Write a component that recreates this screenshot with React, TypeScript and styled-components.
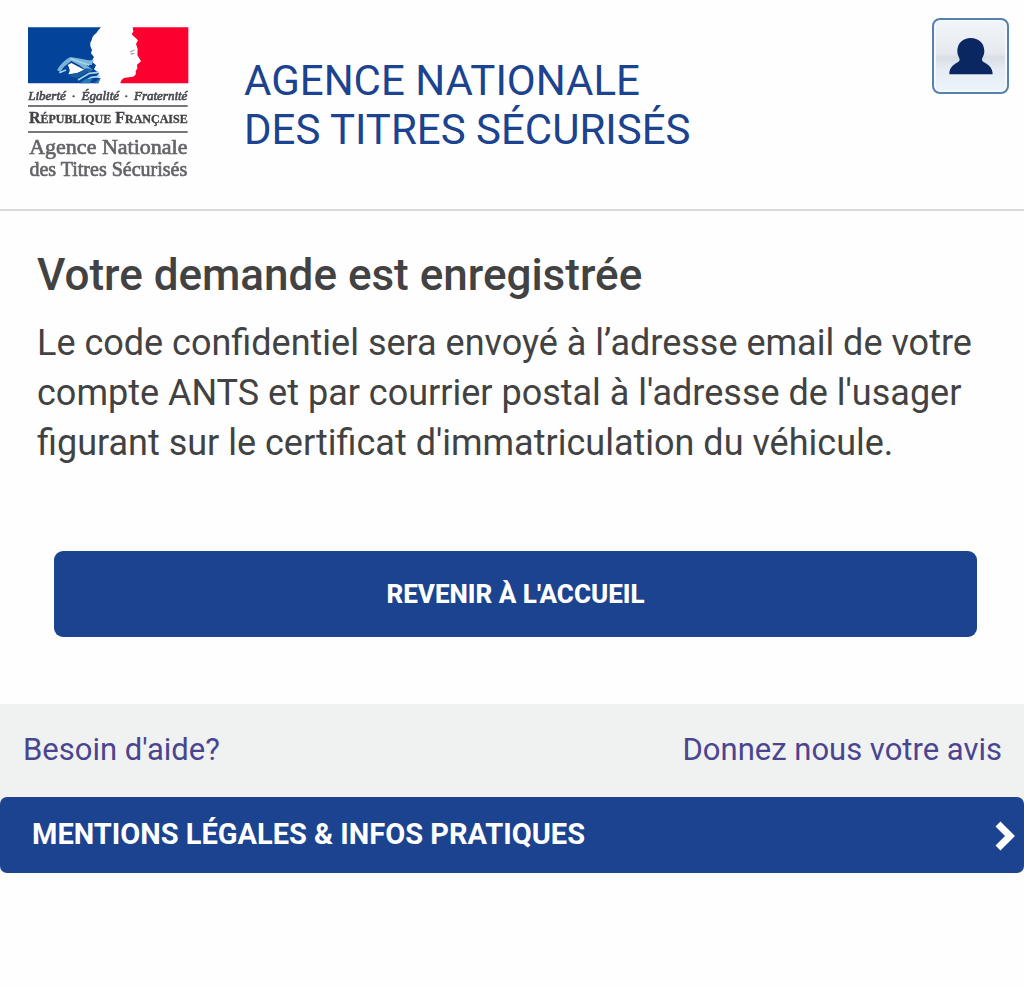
import React from "react";
import styled, { createGlobalStyle } from "styled-components";

const GlobalStyle = createGlobalStyle`
  *, *::before, *::after { box-sizing: border-box; }
  body {
    margin: 0;
    background: #fefefe;
    color: #424242;
    font-family: Roboto, "Liberation Sans", sans-serif;
  }
`;

const Header = styled.header`
  display: flex;
  align-items: flex-start;
  min-height: 211px;
  padding: 18px 15px 0 27px;
  border-bottom: 2px solid #d9dadb;
`;

const HomeLink = styled.a`
  flex: none;
  padding-top: 8px;
  line-height: 0;
`;

const LogoSvg = styled.svg`
  display: block;
  overflow: visible;
  filter: blur(0.7px);
`;

const SiteName = styled.div`
  flex: 1;
  padding: 38px 0 0 54px;
  color: #1b438f;
  font-size: 42px;
  line-height: 49px;
`;

const AccountButton = styled.button`
  flex: none;
  display: flex;
  align-items: center;
  justify-content: center;
  width: 77px;
  height: 76px;
  padding: 0;
  border: 2px solid #5682ab;
  border-radius: 8px;
  background: linear-gradient(#f2f5f9 0%, #e6eaf0 45%, #d9dee5 52%, #e6ecf4 68%, #edf3fb 100%);
  box-shadow: inset 0 0 0 2px #f3f8fc;
  cursor: pointer;
`;

const Main = styled.main`
  padding: 38px 37px 67px;
`;

const Title = styled.h1`
  margin: 0;
  font-size: 44px;
  font-weight: 500;
  line-height: 52px;
`;

const Message = styled.p`
  margin: 17px 0 0;
  font-size: 36px;
  line-height: 50px;
`;

const PrimaryButton = styled.button`
  display: block;
  width: calc(100% - 27px);
  height: 86px;
  margin: 83px 0 0 17px;
  border: 0;
  border-radius: 9px;
  background: #1b438f;
  color: #fff;
  font: 800 26px/32px Roboto, "Liberation Sans", sans-serif;
  text-transform: uppercase;
  cursor: pointer;
`;

const HelpBar = styled.nav`
  display: flex;
  justify-content: space-between;
  padding: 26px 22px 27px 23px;
  background: #f0f2f2;
`;

const HelpLink = styled.a`
  color: #4b4590;
  font-size: 31px;
  line-height: 40px;
  text-decoration: none;
`;

const LegalWrap = styled.footer`
  background: linear-gradient(#f0f2f2 50%, #fefefe 50%);
`;

const LegalButton = styled.button`
  display: flex;
  align-items: center;
  justify-content: space-between;
  width: 100%;
  height: 76px;
  padding: 0 8px 0 32px;
  border: 0;
  border-radius: 7px;
  background: #1b438f;
  color: #fff;
  font: 700 29px/36px Roboto, "Liberation Sans", sans-serif;
  text-transform: uppercase;
  cursor: pointer;
`;

const LegalLabel = styled.span`
  padding-bottom: 3px;
`;

function RepublicLogo() {
  return (
    <LogoSvg
      width="163"
      height="153"
      viewBox="51 48 489 459"
      fontFamily='"Liberation Serif", serif'
      textAnchor="middle"
      role="img"
      aria-label="République Française"
    >
      <path d="M54 52H273Q264 61 259 69Q247 77 245 90Q238 100 241 109L246 120L243 130L252 141L245 154L258 166L252 178L268 190L258 202L272 205L263 220H54Z" fill="#04439a" />
      <path d="M368 52H535V220H331Q333 207 345 203L369 200Q380 196 377 184L382 175L381 164L393 154L382 135L383 117L378 102L384 91Q377 84 367 75Q363 70 370 65Z" fill="#fc0030" />
      <path d="M141 180Q158 152 181 141L205 145L235 151L251 151L245 165L228 165L248 179L235 185L208 166L184 153L162 170L151 186Z" fill="#79b5da" />
      <path d="M173 165L184 159L223 179L201 189L175 193Q184 180 173 165Z" fill="#fff" />
      <path d="M176 194L207 188L229 175L246 178L222 193L201 205L185 201Z" fill="#1b5c9c" />
      <path d="M148 188L168 180M182 146L238 166M204 210L238 190L267 187M220 216L244 202L270 199" fill="none" stroke="#a6d4e8" strokeWidth="5" />
      <path d="M210 220L225 208L248 205L239 220ZM252 220L271 204L266 220Z" fill="#287bb2" />
      <path d="M360 126L374 120M362 132L373 130" fill="none" stroke="#a4a4a8" strokeWidth="4" />
      <g fontSize="39" fontStyle="italic" fill="#4a4a50" stroke="#4a4a50" strokeWidth="2">
        <text x="111" y="270">Liberté</text>
        <text x="190" y="270">·</text>
        <text x="271" y="270">Égalité</text>
        <text x="348" y="270">·</text>
        <text x="452" y="270">Fraternité</text>
      </g>
      <path d="M54 288H533M54 366H533" stroke="#77777a" strokeWidth="6" />
      <text x="295" y="340" fontSize="48" fontWeight="700" fill="#434347" stroke="#434347">
        R<tspan fontSize="36">ÉPUBLIQUE</tspan> F<tspan fontSize="36">RANÇAISE</tspan>
      </text>
      <g fill="#646468" stroke="#646468" strokeWidth="2">
        <text x="295" y="432" fontSize="66">Agence Nationale</text>
        <text x="295" y="499" fontSize="60">des Titres Sécurisés</text>
      </g>
    </LogoSvg>
  );
}

function UserIcon() {
  return (
    <svg width="44" height="38" viewBox="0 0 132 114" aria-hidden="true">
      <path
        d="M65 3C88 3 106 18 106 42C106 56 99 62 99 68C99 78 130 80 131 110Q131 112 129 112H3Q1 112 1 110C2 80 32 78 32 68C32 62 25 56 25 42C25 18 43 3 65 3Z"
        fill="#0a2761"
      />
    </svg>
  );
}

function ChevronIcon() {
  return (
    <svg width="22" height="36" viewBox="0 0 22 36" aria-hidden="true">
      <path d="M4 7L16 19L4 31" fill="none" stroke="#fff" strokeWidth="7" />
    </svg>
  );
}

export default function App() {
  return (
    <>
      <GlobalStyle />
      <Header>
        <HomeLink href="#accueil">
          <RepublicLogo />
        </HomeLink>
        <SiteName>
          AGENCE NATIONALE
          <br />
          DES TITRES SÉCURISÉS
        </SiteName>
        <AccountButton type="button" aria-label="Mon compte">
          <UserIcon />
        </AccountButton>
      </Header>
      <Main>
        <Title>Votre demande est enregistrée</Title>
        <Message>
          Le code confidentiel sera envoyé à l’adresse email de votre compte ANTS et par courrier
          postal à l'adresse de l'usager figurant sur le certificat d'immatriculation du véhicule.
        </Message>
        <PrimaryButton type="button">Revenir à l'accueil</PrimaryButton>
      </Main>
      <HelpBar>
        <HelpLink href="#aide">Besoin d'aide?</HelpLink>
        <HelpLink href="#avis">Donnez nous votre avis</HelpLink>
      </HelpBar>
      <LegalWrap>
        <LegalButton type="button">
          <LegalLabel>Mentions légales &amp; infos pratiques</LegalLabel>
          <ChevronIcon />
        </LegalButton>
      </LegalWrap>
    </>
  );
}
